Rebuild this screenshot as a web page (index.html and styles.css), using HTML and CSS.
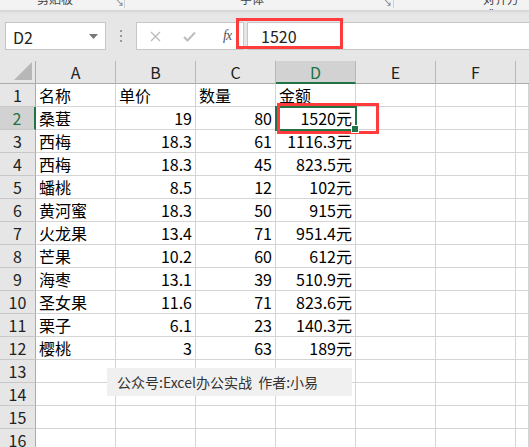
FILE: index.html
```html
<!DOCTYPE html>
<html>
<head>
<meta charset="utf-8">
<link rel="stylesheet" href="styles.css">
</head>
<body>
<div class="app">
  <div class="ribbon">
    <span class="grp g1">剪贴板</span>
    <span class="launch l1">↘</span>
    <span class="sep s1"></span>
    <span class="grp g2">字体</span>
    <span class="launch l2">↘</span>
    <span class="sep s2"></span>
    <span class="grp g3">对齐方式</span>
  </div>
  <div class="fbar">
    <div class="namebox"><span>D2</span><svg class="dd" width="9" height="5" viewBox="0 0 9 5"><path d="M0 0h9L4.5 5z" fill="#777"/></svg></div>
    <div class="dots"><i></i><i></i><i></i></div>
    <div class="btns">
      <svg width="11" height="11" viewBox="0 0 11 11"><path d="M1 1L10 10M10 1L1 10" stroke="#bdbdbd" stroke-width="1.4"/></svg>
      <svg width="13" height="11" viewBox="0 0 13 11"><path d="M1 6L4.5 9.5L12 1.5" stroke="#bdbdbd" stroke-width="2" fill="none"/></svg>
      <span class="fx">fx</span>
    </div>
    <div class="finput">1520</div>
  </div>
  <div class="sheet">
    <div class="corner"><svg width="18" height="18" viewBox="0 0 18 18"><path d="M18 0V18H0z" fill="#b7b7b7"/></svg></div>
    <div class="ch">A</div><div class="ch">B</div><div class="ch">C</div><div class="ch sel">D</div><div class="ch">E</div><div class="ch">F</div><div class="ch last"></div>

    <div class="rh">1</div><div class="c">名称</div><div class="c">单价</div><div class="c">数量</div><div class="c">金额</div><div class="c"></div><div class="c"></div><div class="c"></div>
    <div class="rh sel">2</div><div class="c">桑葚</div><div class="c n">19</div><div class="c n">80</div><div class="c n active">1520元</div><div class="c"></div><div class="c"></div><div class="c"></div>
    <div class="rh">3</div><div class="c">西梅</div><div class="c n">18.3</div><div class="c n">61</div><div class="c n">1116.3元</div><div class="c"></div><div class="c"></div><div class="c"></div>
    <div class="rh">4</div><div class="c">西梅</div><div class="c n">18.3</div><div class="c n">45</div><div class="c n">823.5元</div><div class="c"></div><div class="c"></div><div class="c"></div>
    <div class="rh">5</div><div class="c">蟠桃</div><div class="c n">8.5</div><div class="c n">12</div><div class="c n">102元</div><div class="c"></div><div class="c"></div><div class="c"></div>
    <div class="rh">6</div><div class="c">黄河蜜</div><div class="c n">18.3</div><div class="c n">50</div><div class="c n">915元</div><div class="c"></div><div class="c"></div><div class="c"></div>
    <div class="rh">7</div><div class="c">火龙果</div><div class="c n">13.4</div><div class="c n">71</div><div class="c n">951.4元</div><div class="c"></div><div class="c"></div><div class="c"></div>
    <div class="rh">8</div><div class="c">芒果</div><div class="c n">10.2</div><div class="c n">60</div><div class="c n">612元</div><div class="c"></div><div class="c"></div><div class="c"></div>
    <div class="rh">9</div><div class="c">海枣</div><div class="c n">13.1</div><div class="c n">39</div><div class="c n">510.9元</div><div class="c"></div><div class="c"></div><div class="c"></div>
    <div class="rh">10</div><div class="c">圣女果</div><div class="c n">11.6</div><div class="c n">71</div><div class="c n">823.6元</div><div class="c"></div><div class="c"></div><div class="c"></div>
    <div class="rh">11</div><div class="c">栗子</div><div class="c n">6.1</div><div class="c n">23</div><div class="c n">140.3元</div><div class="c"></div><div class="c"></div><div class="c"></div>
    <div class="rh">12</div><div class="c">樱桃</div><div class="c n">3</div><div class="c n">63</div><div class="c n">189元</div><div class="c"></div><div class="c"></div><div class="c"></div>
    <div class="rh">13</div><div class="c"></div><div class="c"></div><div class="c"></div><div class="c"></div><div class="c"></div><div class="c"></div><div class="c"></div>
    <div class="rh">14</div><div class="c"></div><div class="c"></div><div class="c"></div><div class="c"></div><div class="c"></div><div class="c"></div><div class="c"></div>
    <div class="rh">15</div><div class="c"></div><div class="c"></div><div class="c"></div><div class="c"></div><div class="c"></div><div class="c"></div><div class="c"></div>
    <div class="rh">16</div><div class="c"></div><div class="c"></div><div class="c"></div><div class="c"></div><div class="c"></div><div class="c"></div><div class="c"></div>
  </div>
  <div class="redbox rb1"></div>
  <div class="redbox rb2"></div>
  <div class="watermark">公众号:Excel办公实战&nbsp; 作者:小易</div>
</div>
</body>
</html>
```
FILE: styles.css
```css
* { box-sizing: border-box; }
html, body { margin: 0; padding: 0; }
body {
  width: 529px;
  height: 447px;
  overflow: hidden;
  background: #e6e6e6;
  font-family: "Noto Sans CJK SC", "Microsoft YaHei", sans-serif;
  color: #000;
}
.app { position: relative; width: 529px; height: 447px; overflow: hidden; }

.ribbon {
  position: relative;
  height: 11px;
  background: #f3f3f3;
  border-bottom: 1px solid #d6d6d6;
  box-shadow: 0 1px 2px rgba(0,0,0,0.08);
  overflow: hidden;
  font-size: 12px;
  color: #444;
}
.grp { position: absolute; top: -9px; line-height: 16px; }
.g1 { left: 37px; }
.g2 { left: 240px; }
.g3 { left: 483px; }
.launch { position: absolute; top: -3px; font-size: 9px; line-height: 12px; color: #666; }
.l1 { left: 115px; }
.l2 { left: 383px; }
.sep { position: absolute; top: 0; width: 1px; height: 8px; background: #cfcfcf; }
.s1 { left: 124px; }
.s2 { left: 393px; }

.fbar {
  height: 50px;
  display: flex;
  align-items: flex-start;
  padding-top: 11px;
  padding-left: 5px;
  background: #e6e6e6;
}
.namebox {
  width: 101px;
  height: 28px;
  background: #fff;
  border: 1px solid #c6c6c6;
  display: flex;
  align-items: center;
  justify-content: space-between;
  padding: 0 7px 0 7px;
  font-size: 16px;
  color: #222;
}
.namebox span { margin-top: 1px; }
.dots {
  width: 30px;
  height: 28px;
  display: flex;
  flex-direction: column;
  align-items: center;
  justify-content: center;
  gap: 3px;
}
.dots i { display: block; width: 2px; height: 2px; background: #9a9a9a; }
.btns {
  width: 108px;
  height: 28px;
  background: #fff;
  border: 1px solid #c6c6c6;
  display: flex;
  align-items: center;
  padding-left: 13px;
  gap: 22px;
}
.fx {
  font-family: "Liberation Serif", serif;
  font-style: italic;
  font-size: 14px;
  color: #555;
  margin-left: 5px;
  letter-spacing: -1px;
}
.finput {
  flex: 1;
  height: 28px;
  margin-left: 3px;
  background: #fff;
  border: 1px solid #c6c6c6;
  border-right: none;
  font-size: 16px;
  color: #222;
  line-height: 26px;
  padding-left: 13px;
}

.sheet {
  display: grid;
  grid-template-columns: 36px repeat(6, 80px) 1fr;
  grid-auto-rows: 23px;
  background: #fff;
  font-size: 16px;
}
.corner {
  background: #e6e6e6;
  border-right: 1px solid #ababab;
  border-bottom: 1px solid #ababab;
  display: flex;
  align-items: flex-end;
  justify-content: flex-end;
  padding: 0 3px 3px 0;
}
.ch {
  background: #e6e6e6;
  border-right: 1px solid #b8b8b8;
  border-bottom: 1px solid #ababab;
  text-align: center;
  line-height: 22px;
  color: #222;
}
.ch.last { border-right: none; }
.ch.sel {
  background: #d2d2d2;
  color: #217346;
  border-bottom: 2px solid #217346;
}
.rh {
  background: #e6e6e6;
  border-right: 1px solid #ababab;
  border-bottom: 1px solid #c8c8c8;
  text-align: center;
  line-height: 22px;
  color: #222;
}
.rh.sel {
  background: #d2d2d2;
  color: #217346;
  border-right: 2px solid #217346;
}
.c {
  border-right: 1px solid #d4d4d4;
  border-bottom: 1px solid #d4d4d4;
  line-height: 22px;
  padding: 0 3px;
  white-space: nowrap;
  overflow: visible;
}
.c.n { text-align: right; }
.c.active { position: relative; }
.c.active::after {
  content: "";
  position: absolute;
  left: -1px;
  top: -1px;
  right: -2px;
  bottom: -2px;
  border: 2px solid #217346;
}
.c.active::before {
  content: "";
  position: absolute;
  right: -4px;
  bottom: -4px;
  width: 6px;
  height: 6px;
  background: #217346;
  border: 1px solid #fff;
  z-index: 2;
}

.redbox {
  position: absolute;
  border: 3px solid #ff3b3b;
}
.rb1 { left: 236px; top: 18px; width: 107px; height: 31px; }
.rb2 { left: 277px; top: 103px; width: 102px; height: 31px; }

.watermark {
  position: absolute;
  left: 107px;
  top: 368px;
  width: 245px;
  height: 28px;
  background: #f0f0f0;
  font-size: 14px;
  color: #333;
  line-height: 28px;
  padding-left: 10px;
  white-space: nowrap;
}
```
